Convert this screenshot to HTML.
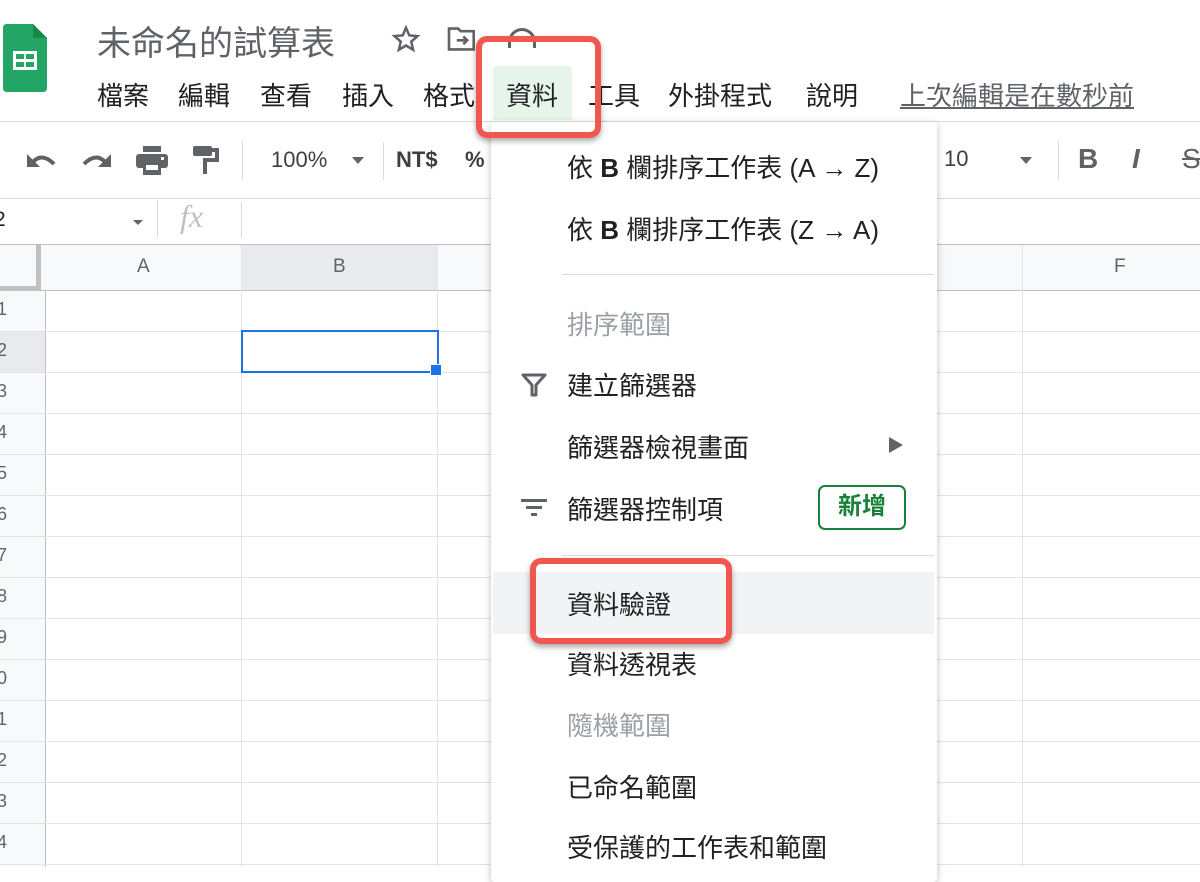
<!DOCTYPE html>
<html><head><meta charset="utf-8">
<style>
*{margin:0;padding:0;box-sizing:border-box}
body{width:1200px;height:867px;overflow:hidden;background:#fff;position:relative;font-family:"Liberation Sans","Noto Sans CJK TC",sans-serif;color:#202124}
.a{position:absolute;white-space:nowrap}
.mb{font-size:26px;top:76px;color:#202124}
.hl{background:#f8f9fa}
.vl{position:absolute;width:1px;background:#e2e3e3}
.hlin{position:absolute;height:1px;background:#e2e3e3}
.rn{position:absolute;left:-13px;width:20px;text-align:right;font-size:18px;color:#5f6368}
.mi{position:absolute;left:567px;font-size:26px;color:#202124;white-space:nowrap}
.gr{color:#9aa0a6}
</style></head><body>
<svg class="a" style="left:3px;top:24px" width="44" height="68" viewBox="0 0 44 68"><path d="M4 0H30L44 14V64Q44 68 40 68H4Q0 68 0 64V4Q0 0 4 0Z" fill="#23a566"/><path d="M30 0V14H44Z" fill="#168a4b"/><rect x="10" y="27" width="24" height="19" fill="#fff"/><rect x="13" y="30" width="8" height="5" fill="#23a566"/><rect x="23" y="30" width="8" height="5" fill="#23a566"/><rect x="13" y="38" width="8" height="5" fill="#23a566"/><rect x="23" y="38" width="8" height="5" fill="#23a566"/></svg>
<div class="a" style="left:97px;top:16px;font-size:34px;color:#5f6368">未命名的試算表</div>
<svg class="a" style="left:390px;top:24px" width="32" height="30" viewBox="0 0 24 24"><path d="M12 3l2.6 6.1 6.6.6-5 4.4 1.5 6.5L12 17.2 6.3 20.6l1.5-6.5-5-4.4 6.6-.6z" fill="none" stroke="#5f6368" stroke-width="2"/></svg>
<svg class="a" style="left:446px;top:26px" width="32" height="26" viewBox="0 0 24 20"><path d="M2 2h7l2 2h10v14H2z" fill="none" stroke="#5f6368" stroke-width="2"/><path d="M8 11h8M13 8l3 3-3 3" fill="none" stroke="#5f6368" stroke-width="2"/></svg>
<div class="a" style="left:508px;top:28px;width:28px;height:20px;border:3px solid #5f6368;border-radius:14px 14px 0 0;border-bottom:none"></div>
<div class="a" style="left:493px;top:66px;width:79px;height:54px;background:#e6f4ea;border-radius:4px 4px 0 0"></div>
<div class="a mb" style="left:97px">檔案</div>
<div class="a mb" style="left:178px">編輯</div>
<div class="a mb" style="left:260px">查看</div>
<div class="a mb" style="left:342px">插入</div>
<div class="a mb" style="left:423px">格式</div>
<div class="a mb" style="left:506px">資料</div>
<div class="a mb" style="left:588px">工具</div>
<div class="a mb" style="left:668px">外掛程式</div>
<div class="a mb" style="left:806px">說明</div>
<div class="a mb" style="left:900px;color:#5f6368;text-decoration:underline">上次編輯是在數秒前</div>
<div class="hlin" style="left:0;top:121px;width:1200px;background:#dadce0"></div>
<svg class="a" style="left:26px;top:148px" width="32" height="24" viewBox="0 0 32 24"><path d="M4 18Q14 2 28 16" fill="none" stroke="#5f6368" stroke-width="4"/><path d="M1 6V19H14Z" fill="#5f6368"/></svg>
<svg class="a" style="left:80px;top:148px" width="32" height="24" viewBox="0 0 32 24"><path d="M28 18Q18 2 4 16" fill="none" stroke="#5f6368" stroke-width="4"/><path d="M31 6V19H18Z" fill="#5f6368"/></svg>
<svg class="a" style="left:136px;top:146px" width="32" height="30" viewBox="0 0 32 30"><rect x="7" y="0" width="18" height="6" fill="#5f6368"/><rect x="0" y="8" width="32" height="14" rx="3" fill="#5f6368"/><rect x="7" y="17" width="18" height="12" fill="#5f6368"/><rect x="10" y="19" width="12" height="5" fill="#fff"/><rect x="25" y="11" width="3" height="3" fill="#fff"/></svg>
<svg class="a" style="left:193px;top:146px" width="26" height="30" viewBox="0 0 26 30"><rect x="0" y="0" width="19" height="10" rx="2" fill="#5f6368"/><path d="M19 4h5v10H12v14" fill="none" stroke="#5f6368" stroke-width="4"/></svg>
<div class="vl" style="left:242px;top:142px;height:38px;background:#dadce0"></div>
<div class="a" style="left:271px;top:147px;font-size:22px;color:#3c4043">100%</div>
<div class="a" style="left:352px;top:157px;border:6px solid transparent;border-top:7px solid #5f6368"></div>
<div class="vl" style="left:383px;top:142px;height:38px;background:#dadce0"></div>
<div class="a" style="left:396px;top:147px;font-size:22px;color:#3c4043;font-weight:bold">NT$</div>
<div class="a" style="left:465px;top:147px;font-size:22px;color:#3c4043;font-weight:bold">%</div>
<div class="a" style="left:944px;top:146px;font-size:22px;color:#3c4043">10</div>
<div class="a" style="left:1020px;top:157px;border:6px solid transparent;border-top:7px solid #5f6368"></div>
<div class="vl" style="left:1058px;top:142px;height:38px;background:#dadce0"></div>
<div class="a" style="left:1078px;top:143px;font-size:28px;color:#5f6368;font-weight:bold">B</div>
<div class="a" style="left:1132px;top:143px;font-size:28px;color:#5f6368;font-weight:bold;font-style:italic">I</div>
<div class="a" style="left:1182px;top:143px;font-size:28px;color:#5f6368;text-decoration:line-through">S</div>
<div class="hlin" style="left:0;top:198px;width:1200px;background:#dadce0"></div>
<div class="a" style="left:-6px;top:208px;font-size:21px;color:#202124">2</div>
<div class="a" style="left:133px;top:220px;border:5px solid transparent;border-top:5px solid #5f6368"></div>
<div class="vl" style="left:157px;top:200px;height:38px;background:#dadce0"></div>
<div class="a" style="left:180px;top:198px;font-size:32px;color:#bdc1c6;font-style:italic;font-family:'Liberation Serif',serif">fx</div>
<div class="vl" style="left:241px;top:202px;height:36px;background:#dadce0"></div>
<div class="hlin" style="left:0;top:244px;width:1200px;background:#c0c0c0"></div>
<div class="a hl" style="left:0;top:245px;width:1200px;height:45px"></div>
<div class="a" style="left:241px;top:245px;width:196px;height:45px;background:#e8eaed"></div>
<div class="a" style="left:0;top:245px;width:41px;height:45px;background:#f8f9fa;border-right:5px solid #c0c0c0;border-bottom:4px solid #c0c0c0"></div>
<div class="a" style="left:137px;top:256px;font-size:19px;color:#5f6368">A</div>
<div class="a" style="left:333px;top:256px;font-size:19px;color:#5f6368">B</div>
<div class="a" style="left:1114px;top:256px;font-size:19px;color:#5f6368">F</div>
<div class="hlin" style="left:0;top:290px;width:1200px;background:#c0c0c0"></div>
<div class="a hl" style="left:0;top:291px;width:46px;height:576px;border-right:1px solid #c0c0c0"></div>
<div class="a" style="left:0;top:331px;width:46px;height:41px;background:#e8eaed;border-right:1px solid #c0c0c0"></div>
<div class="vl" style="left:241px;top:245px;height:622px"></div>
<div class="vl" style="left:437px;top:245px;height:622px"></div>
<div class="vl" style="left:1022px;top:245px;height:622px"></div>
<div id="rows"></div>
<script>
var h='';for(var i=0;i<14;i++){var y=290+41*(i+1);h+='<div class="hlin" style="left:0;top:'+y+'px;width:1200px"></div><div class="rn" style="top:'+(299+41*i)+'px">'+(i+1)+'</div>';}
document.getElementById('rows').innerHTML=h;
</script>
<div class="a" style="left:241px;top:330px;width:198px;height:43px;border:2px solid #1a73e8"></div>
<div class="a" style="left:430px;top:364px;width:12px;height:12px;background:#1a73e8;border:1px solid #fff"></div>
<div class="a" style="left:491px;top:122px;width:446px;height:760px;background:#fff;box-shadow:0 2px 8px rgba(0,0,0,.25);border-radius:4px"></div>
<div class="mi" style="top:148px">依 <b>B</b> 欄排序工作表 (A → Z)</div>
<div class="mi" style="top:210px">依 <b>B</b> 欄排序工作表 (Z → A)</div>
<div class="hlin" style="left:562px;top:274px;width:372px;background:#dadce0"></div>
<div class="mi gr" style="top:305px">排序範圍</div>
<svg class="a" style="left:521px;top:373px" width="26" height="24" viewBox="0 0 26 24"><path d="M2 2H24L15 12V22H11V12Z" fill="none" stroke="#5f6368" stroke-width="3" stroke-linejoin="round"/></svg>
<div class="mi" style="top:366px">建立篩選器</div>
<div class="mi" style="top:428px">篩選器檢視畫面</div>
<div class="a" style="left:889px;top:437px;border:8px solid transparent;border-left:14px solid #5f6368;border-right:none"></div>
<svg class="a" style="left:521px;top:499px" width="26" height="20" viewBox="0 0 26 20"><rect x="0" y="0" width="26" height="3" fill="#5f6368"/><rect x="5" y="7" width="16" height="3" fill="#5f6368"/><rect x="10" y="14" width="6" height="3" fill="#5f6368"/></svg>
<div class="mi" style="top:490px">篩選器控制項</div>
<div class="a" style="left:818px;top:485px;width:88px;height:45px;border:2px solid #188038;border-radius:7px;color:#188038;font-size:24px;font-weight:bold;text-align:center;line-height:40px">新增</div>
<div class="hlin" style="left:562px;top:555px;width:372px;background:#dadce0"></div>
<div class="a" style="left:493px;top:572px;width:441px;height:62px;background:#f1f3f4"></div>
<div class="mi" style="top:585px">資料驗證</div>
<div class="mi" style="top:645px">資料透視表</div>
<div class="mi gr" style="top:706px">隨機範圍</div>
<div class="mi" style="top:768px">已命名範圍</div>
<div class="mi" style="top:828px">受保護的工作表和範圍</div>
<div class="a" style="left:476px;top:36px;width:125px;height:102px;border:6px solid #f0574f;border-radius:11px;box-shadow:0 3px 6px rgba(0,0,0,.35)"></div>
<div class="a" style="left:530px;top:558px;width:202px;height:86px;border:6px solid #f0574f;border-radius:11px;box-shadow:0 3px 6px rgba(0,0,0,.35)"></div>
</body></html>
